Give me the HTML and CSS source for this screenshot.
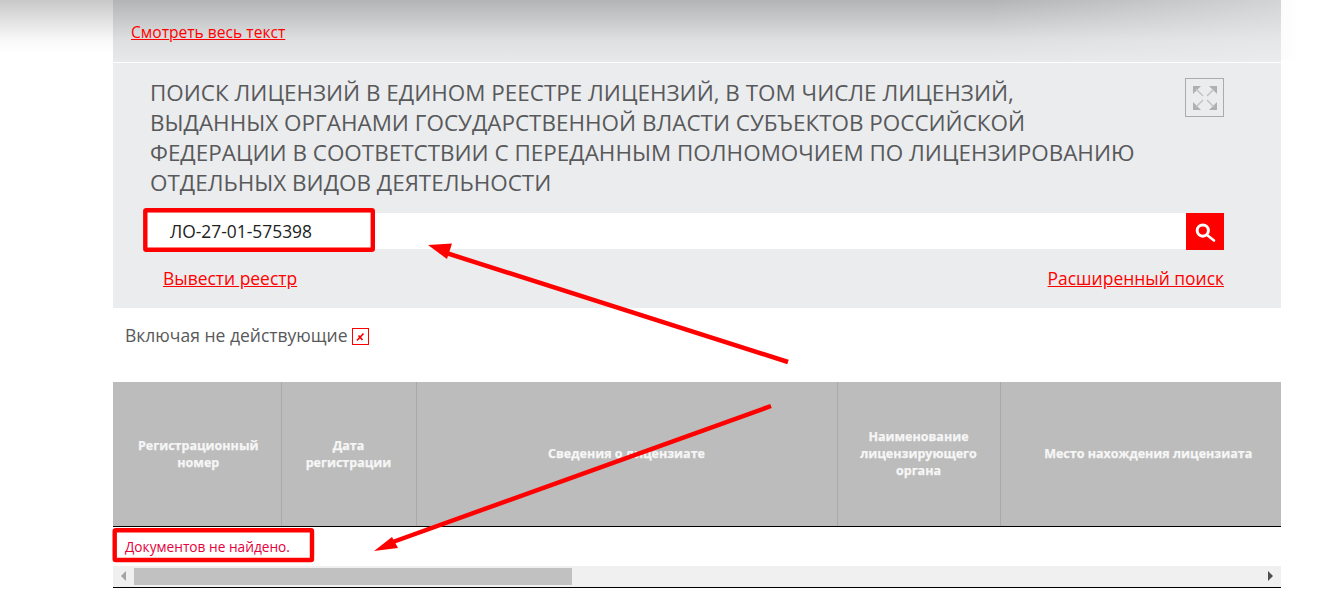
FILE: index.html
```html
<!DOCTYPE html>
<html lang="ru">
<head>
<meta charset="utf-8">
<title>Поиск лицензий</title>
<link rel="stylesheet" href="styles.css">
</head>
<body>
<div class="page">
  <div class="intro"><a href="#" class="intro-link">Смотреть весь текст</a></div>
  <section class="search-panel">
    <div class="title-row">
      <h1 class="title">ПОИСК ЛИЦЕНЗИЙ В ЕДИНОМ РЕЕСТРЕ ЛИЦЕНЗИЙ, В ТОМ ЧИСЛЕ ЛИЦЕНЗИЙ, ВЫДАННЫХ ОРГАНАМИ ГОСУДАРСТВЕННОЙ ВЛАСТИ СУБЪЕКТОВ РОССИЙСКОЙ ФЕДЕРАЦИИ В СООТВЕТСТВИИ С ПЕРЕДАННЫМ ПОЛНОМОЧИЕМ ПО ЛИЦЕНЗИРОВАНИЮ ОТДЕЛЬНЫХ ВИДОВ ДЕЯТЕЛЬНОСТИ</h1>
      <span class="expand">
        <svg width="26" height="26" viewBox="0 0 26 26"><path class="expand-icon" d="M1 1h8L1 9zM25 1h-8l8 8zM1 25h8l-8-8zM25 25h-8l8-8z"/><path class="expand-line" d="M4 4l7 7M22 4l-7 7M4 22l7-7M22 22l-7-7"/></svg>
      </span>
    </div>
    <div class="search-row">
      <div class="search-input">ЛО-27-01-575398</div>
      <button class="search-btn" type="button" aria-label="Поиск">
        <svg width="22" height="22" viewBox="0 0 22 22"><circle class="lens" cx="8.8" cy="9.6" r="5.6"/><path class="handle" d="M13 14l7 5.500"/></svg>
      </button>
    </div>
    <div class="links-row">
      <a href="#" class="panel-link">Вывести реестр</a>
      <a href="#" class="panel-link">Расширенный поиск</a>
    </div>
  </section>
  <div class="include-row">
    <span>Включая не действующие</span>
    <span class="check"><svg width="11" height="11" viewBox="0 0 11 11"><path class="check-mark" d="M2 9.5 8.5 2.5M3.5 4.5l4 4.5"/></svg></span>
  </div>
  <table class="results">
    <thead>
      <tr>
        <th class="c1">Регистрационный<br>номер</th>
        <th class="c2">Дата<br>регистрации</th>
        <th class="c3">Сведения о лицензиате</th>
        <th class="c4">Наименование<br>лицензирующего<br>органа</th>
        <th class="c5">Место нахождения лицензиата</th>
      </tr>
    </thead>
    <tbody>
      <tr><td colspan="5" class="empty">Документов не найдено.</td></tr>
    </tbody>
  </table>
  <div class="scrollbar">
    <span class="arrow-left"></span>
    <span class="thumb"></span>
    <span class="arrow-right"></span>
  </div>
</div>
<svg class="annotations" width="1318" height="609" viewBox="0 0 1318 609">
  <rect class="mark" x="145.3" y="210.3" width="227.5" height="39.5" rx="1"/>
  <rect class="mark" x="114.7" y="530.2" width="197.3" height="29.8" rx="1"/>
  <path class="line" d="M788 362 440 251"/>
  <path class="head" d="M428 245 452 243.500 447 259z"/>
  <path class="line" d="M771 406 390 543"/>
  <path class="head" d="M374 551 392 537 398 548z"/>
</svg>
</body>
</html>
```
FILE: styles.css
```css
* { box-sizing: border-box; }
html, body { margin: 0; height: 100%; }
body {
  background:
    linear-gradient(90deg, transparent 1281px, #fcfcfc 1281px, #fff 1300px) no-repeat 0 0 / 100% 60px,
    linear-gradient(180deg, #c8c8c8 0, #e6e6e6 24px, #fafafa 42px, #fff 54px) no-repeat 0 0 / 100% 60px,
    #fff;
  font-family: "Open Sans", sans-serif;
  overflow: hidden;
  position: relative;
}
.page { width: 1168px; margin-left: 113px; }
.intro {
  height: 63px;
  padding: 23px 0 0 18px;
  border-bottom: 1px solid #fff;
  background:
    linear-gradient(90deg, transparent 75%, rgba(235,237,239,.55) 100%),
    linear-gradient(180deg, #b3b4b6 0, #c4c5c7 16px, #dddfe1 40px, #e7e9eb 62px);
}
.intro-link { color: #f00; font-size: 15.6px; line-height: 18px; display: block; }
.search-panel { height: 245px; background: #ebecee; padding: 15px 57px 0 30px; }
.title-row { display: flex; justify-content: space-between; align-items: flex-start; padding-left: 7px; }
.title { margin: 0; width: 990px; font-size: 22.46px; font-weight: 400; line-height: 30px; color: #58595b; }
.expand { width: 39px; height: 39px; border: 1px solid #a9abad; display: flex; align-items: center; justify-content: center; }
.expand-icon { fill: #aeafb1; }
.expand-line { fill: none; stroke: #c2c3c5; stroke-width: 1.5; }
.search-row { display: flex; height: 36px; margin-top: 15px; }
.search-input { flex: 1; background: #fff; padding-left: 27px; font-size: 17.4px; line-height: 36px; color: #222; }
.search-btn { width: 38px; height: 37px; border: 0; padding: 0; background: #f00; display: flex; align-items: center; justify-content: center; }
.lens { fill: none; stroke: #fff; stroke-width: 3; }
.handle { fill: none; stroke: #fff; stroke-width: 2.6; stroke-linecap: round; }
.links-row { display: flex; justify-content: space-between; padding-left: 20px; margin-top: 17px; }
.panel-link { color: #f00; font-size: 17.45px; line-height: 24px; }
.include-row { height: 74px; padding: 15px 0 0 12px; display: flex; align-items: flex-start; gap: 4px; color: #58595b; font-size: 17.5px; line-height: 24px; }
.check { width: 17px; height: 17px; margin-top: 5px; border: 1px solid #f00; display: flex; align-items: center; justify-content: center; }
.check-mark { fill: none; stroke: #f00; stroke-width: 1.7; }
.results { width: 1168px; border-collapse: collapse; table-layout: fixed; }
.results th { height: 144px; padding: 0; background: #bcbcbc; color: #f6f6f6; font-size: 12.5px; line-height: 17px; font-weight: 700; -webkit-text-stroke: 0.25px #f6f6f6; text-align: center; vertical-align: middle; border-left: 1px solid #a9a9a9; border-bottom: 1px solid #000; }
.results th:first-child { border-left: 0; }
.c1 { width: 168px; } .c2 { width: 135px; } .c3 { width: 421px; } .c4 { width: 163px; } .results .c5 { width: 281px; padding-left: 15px; }
.results .c1 { padding-left: 3px; }
.empty { height: 39px; padding: 0 0 0 12px; color: #e6003c; font-size: 13.7px; line-height: 39px; }
.scrollbar { height: 22px; background: #f0f0f0; border-bottom: 1px solid #000; display: flex; align-items: center; position: relative; padding: 0 0 0 21px; }
.thumb { width: 438px; height: 17px; background: #c1c1c1; }
.arrow-left { position: absolute; left: 8px; top: 5px; width: 0; height: 0; border: 5px solid transparent; border-left-width: 0; border-right: 5px solid #a3a3a3; }
.arrow-right { position: absolute; right: 8px; top: 5px; width: 0; height: 0; border: 5px solid transparent; border-right-width: 0; border-left: 5px solid #505050; }
.annotations { position: absolute; left: 0; top: 0; pointer-events: none; }
.mark { fill: none; stroke: #f00; stroke-width: 4.4; }
.line { fill: none; stroke: #f00; stroke-width: 4.5; }
.head { fill: #f00; }
```
